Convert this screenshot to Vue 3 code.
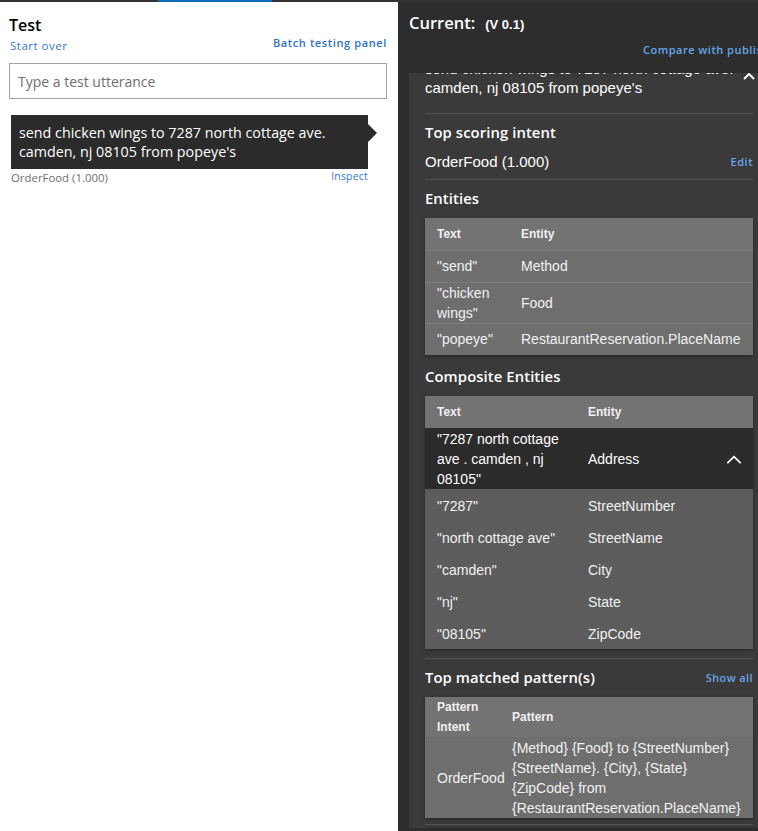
<script setup>
const entities = [
  { text: '"send"', entity: 'Method' },
  { text: '"chicken wings"', entity: 'Food' },
  { text: '"popeye"', entity: 'RestaurantReservation.PlaceName' }
]
const parts = [
  { text: '"7287"', entity: 'StreetNumber' },
  { text: '"north cottage ave"', entity: 'StreetName' },
  { text: '"camden"', entity: 'City' },
  { text: '"nj"', entity: 'State' },
  { text: '"08105"', entity: 'ZipCode' }
]
</script>

<template>
  <div class="page">
    <section class="test">
      <div class="topbar"><span class="topbar-active"></span></div>
      <div class="test-head">
        <div>
          <h1 class="test-title">Test</h1>
          <a class="link start">Start over</a>
        </div>
        <a class="link batch">Batch testing panel</a>
      </div>
      <div class="input">Type a test utterance</div>
      <div class="bubble">send chicken wings to 7287 north cottage ave. camden, nj 08105 from popeye's</div>
      <div class="bubble-foot">
        <span class="score">OrderFood (1.000)</span>
        <a class="link inspect">Inspect</a>
      </div>
    </section>

    <section class="inspect-panel">
      <div class="current"><span class="current-title">Current:</span><span class="version">(V 0.1)</span></div>
      <div class="compare-row"><a class="link-d compare">Compare with published</a></div>
      <div class="scroller">
        <div class="utterance">
          <p>send chicken wings to 7287 north cottage ave. camden, nj 08105 from popeye's</p>
          <svg class="caret-top" viewBox="0 0 12 8" width="12" height="8"><path d="M1 7 L6 2 L11 7" fill="none" stroke="#fff" stroke-width="2"/></svg>
        </div>

        <div class="block intent">
          <h2>Top scoring intent</h2>
          <div class="intent-row"><span>OrderFood (1.000)</span><a class="link-d">Edit</a></div>
        </div>

        <div class="block ent">
          <h2>Entities</h2>
          <table class="tbl t1">
            <thead><tr><th class="c1">Text</th><th>Entity</th></tr></thead>
            <tbody>
              <tr v-for="e in entities" :key="e.text"><td class="c1">{{ e.text }}</td><td>{{ e.entity }}</td></tr>
            </tbody>
          </table>
        </div>

        <h2 class="comp-title">Composite Entities</h2>
        <table class="tbl t2">
          <thead><tr><th class="c1">Text</th><th>Entity</th><th class="c3"></th></tr></thead>
          <tbody>
            <tr class="open">
              <td class="c1">"7287 north cottage ave . camden , nj 08105"</td>
              <td>Address</td>
              <td class="c3"><svg viewBox="0 0 18 10" width="16" height="9"><path d="M1.5 9 L9 1.8 L16.5 9" fill="none" stroke="#fff" stroke-width="2"/></svg></td>
            </tr>
            <tr v-for="p in parts" :key="p.text" class="sub"><td class="c1">{{ p.text }}</td><td colspan="2">{{ p.entity }}</td></tr>
          </tbody>
        </table>

        <div class="block pattern">
          <div class="pattern-head"><h2>Top matched pattern(s)</h2><a class="link-d show">Show all</a></div>
          <table class="tbl t3">
            <thead><tr><th class="c1">Pattern Intent</th><th>Pattern</th></tr></thead>
            <tbody>
              <tr>
                <td class="c1">OrderFood</td>
                <td>{Method} {Food} to {StreetNumber} {StreetName}. {City}, {State} {ZipCode} from {RestaurantReservation.PlaceName}</td>
              </tr>
            </tbody>
          </table>
        </div>
      </div>
    </section>
  </div>
</template>

<style>
html, body { margin: 0; background: #fff; overflow: hidden; }
</style>

<style scoped>
.page { display: flex; width: 758px; height: 831px; overflow: hidden; font-family: "Open Sans", "Noto Sans", sans-serif; }
a { cursor: pointer; }
h1, h2, p { margin: 0; }

.test { width: 398px; flex: none; background: #fff; color: #000; box-sizing: border-box; }
.topbar { height: 2px; background: #333; padding-left: 158px; }
.topbar-active { display: block; width: 114px; height: 2px; background: #0f6cbd; }
.test-head { display: flex; justify-content: space-between; padding: 12px 11px 0 9px; height: 49px; box-sizing: border-box; }
.test-title { font-size: 16px; line-height: 22px; font-weight: 600; }
.link { color: #2f7ad6; font-size: 11.5px; letter-spacing: .5px; line-height: 16px; font-weight: 400; display: block; }
.start { margin-top: 2px; margin-left: 1px; }
.batch { margin-top: 21px; color: #2d72c8; font-size: 11px; letter-spacing: .62px; font-weight: 600; }
.input { margin: 12px 11px 0 9px; height: 36px; box-sizing: border-box; border: 1px solid #a3a3a3; padding-left: 8px; font-size: 14px; line-height: 36px; color: #6f6f6f; }
.bubble { position: relative; margin: 16px 30px 0 11px; width: 357px; box-sizing: border-box; height: 54px; padding: 8px 8px; background: #2b2b2b; color: #fff; font-size: 14.3px; line-height: 19px; }
.bubble::after { content: ""; position: absolute; left: 100%; top: 9px; border: 9px solid transparent; border-left-color: #2b2b2b; border-right: 0; }
.bubble-foot { display: flex; justify-content: space-between; align-items: flex-start; width: 357px; margin-left: 11px; box-sizing: border-box; }
.score { font-size: 11.4px; line-height: 18px; color: #707070; }
.inspect { font-size: 10.5px; line-height: 15px; letter-spacing: .2px; }

.inspect-panel { flex: 1; background: #2d2d2d; color: #fff; min-width: 0; overflow: hidden; border-top: 2px solid #333; box-sizing: border-box; }
.current { padding: 10px 0 0 11px; line-height: 22px; height: 36px; box-sizing: border-box; }
.current-title { font-size: 16.5px; font-weight: 600; }
.version { font: 700 13px/22px "Liberation Sans", sans-serif; margin-left: 10px; }
.compare-row { height: 35px; padding-left: 245px; white-space: nowrap; }
.compare { line-height: 18px; padding-top: 3px; display: block; width: 200px; font-size: 11.5px; letter-spacing: .9px; }
.link-d { color: #66a6e8; font-size: 11px; font-weight: 600; letter-spacing: .5px; }

.scroller { margin-left: 11px; height: 755px; background: #3a3a3a; overflow: hidden; padding: 0 5px 0 16px; box-sizing: border-box; }
.utterance { position: relative; margin-top: -14px; height: 54px; border-bottom: 1px solid #555; }
.utterance p { font: 15px/19px "Liberation Sans", sans-serif; width: 315px; }
.caret-top { position: absolute; right: -2px; top: 13px; }

h2 { font-size: 14.8px; font-weight: 600; line-height: 20px; letter-spacing: .1px; }
.intent { padding-top: 8px; height: 57px; border-bottom: 1px solid #555; }
.intent-row { display: flex; justify-content: space-between; align-items: center; font: 15px/20px "Liberation Sans", sans-serif; margin-top: 10px; }
.intent-row .link-d { font-family: "Open Sans", sans-serif; }

.ent { padding-top: 8px; }
.ent h2 { margin-bottom: 10px; }

.tbl { width: 328px; border-collapse: collapse; table-layout: fixed; font: 14px/20px "Liberation Sans", sans-serif; color: #f2f2f2; box-shadow: 0 1px 3px rgba(0,0,0,.4); background: #6e6e6e; }
.tbl th { background: #737373; font-size: 12px; font-weight: 700; text-align: left; padding: 0; height: 32px; line-height: 20px; color: #f0f0f0; }
.tbl td { padding: 0; vertical-align: middle; }
.c1 { padding-left: 12px !important; }

.t1 .c1 { width: 84px; }
.t1 tr { border-bottom: 1px solid #7e7e7e; }
.t1 tbody tr:last-child { border-bottom: 0; }
.t1 td { height: 31px; }
.t1 tbody tr:not(:nth-child(2)) td { height: 29px; padding-bottom: 2px; }
.t1 thead th { height: 32px; }

.comp-title { margin-top: 11px; margin-bottom: 10px; }
.t2 .c1 { width: 151px; }
.t2 .c3 { width: 40px; text-align: right; padding-right: 11px; box-sizing: border-box; }
.t2 .open td { background: #2b2b2b; height: 61px; color: #fff; }
.t2 .open td:first-child { padding-right: 10px; }
.t2 .sub td { background: #5c5c5c; height: 30px; padding-top: 2px; }

.pattern { margin-top: 9px; border-top: 1px solid #555; padding-top: 8px; border-bottom: 1px solid #555; padding-bottom: 6px; }
.pattern-head { display: flex; justify-content: space-between; align-items: center; margin-bottom: 10px; }
.show { letter-spacing: .4px; }
.t3 .c1 { width: 75px; }
.t3 th { height: 40px; }
.t3 th.c1 { line-height: 20px; }
.t3 td { height: 81px; }
</style>
